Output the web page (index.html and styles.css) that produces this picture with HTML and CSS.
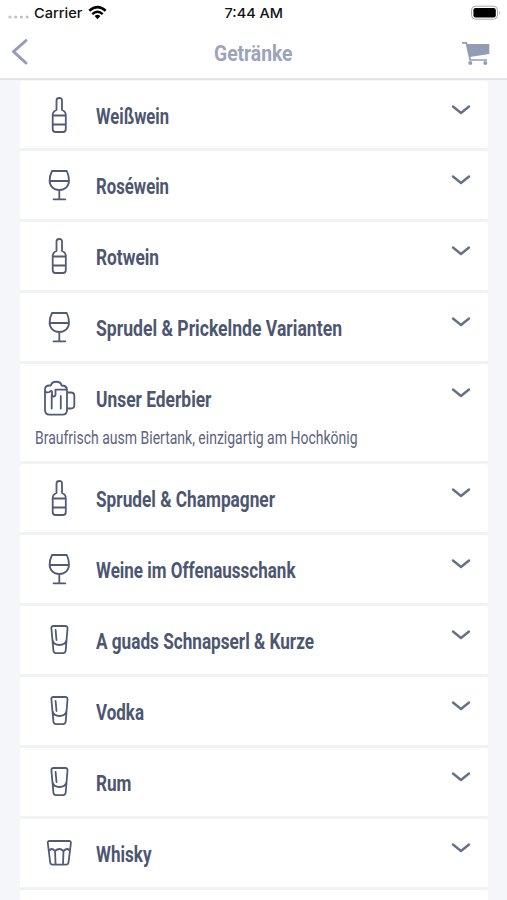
FILE: index.html
```html
<!DOCTYPE html>
<html lang="de">
<head>
<meta charset="utf-8">
<title>Getränke</title>
<link rel="stylesheet" href="styles.css">
</head>
<body>
<svg class="defs" width="0" height="0">
  <symbol id="bottle" viewBox="0 0 36 40"><path d="M15.500 15V5.500Q15.500 3 18.300 3T21 5.500V15Q24.800 16.500 24.800 20V34Q24.800 37 22 37H14.500Q11.700 37 11.700 34V20Q11.700 16.500 15.500 15ZM12 20.500H24.500M12 29.500H24.500"/></symbol>
  <symbol id="wine" viewBox="0 0 36 40"><path d="M11 6H25.800Q28 11 28 15.500C28 21 24 25 18.300 25S8.600 21 8.600 15.500Q8.600 11 11 6ZM9 16H27.600M18.300 25V34M12.500 34.300H24.300"/></symbol>
  <symbol id="beer" viewBox="0 0 36 40"><path d="M4 12V32Q4 36.600 8.500 36.600H21.500Q26 36.600 26 32V13Q26 11.700 24.500 11.700H14.500V16Q14.500 18.500 12.700 18.500T11 16V14Q11 11.700 8.500 14Q4 15.500 4 11.500Q4 7.500 8.500 7.500H10C10.500 2.500 20 2.500 20.500 7.500C24.500 7.500 26 9 26 12M26 14.500H30Q33.300 14.500 33.300 17.500V27Q33.300 30.500 30 30.500H26M10.700 17V30.500M19.800 18V30.500"/></symbol>
  <symbol id="shot" viewBox="0 0 36 40"><path d="M12.500 6H24.300Q26.700 6 26.500 8.500L24.700 30.500Q24.500 33.100 22 33.100H15Q12.600 33.100 12.400 30.500L10.400 8.500Q10.100 6 12.500 6ZM11.500 20Q12.500 25 18.400 25T25.500 20M14.600 10L15.500 20"/></symbol>
  <symbol id="whisky" viewBox="0 0 36 40"><path d="M8.500 8H28Q30.200 8 29.900 10L27.500 29.500Q27.200 31.700 25 31.700H11.700Q9.500 31.700 9.200 29.500L6.800 10Q6.500 8 8.500 8ZM8 18Q10.500 14 14 18Q18.300 14 22.500 18Q26.500 14 29 18M14 18L14.600 31.500M22.500 18L22 31.500"/></symbol>
</svg>
<header class="header">
  <div class="status">
    <svg class="left" width="112" height="26" viewBox="0 0 112 26">
      <g fill="#c2c2c4"><circle cx="10" cy="17" r="1.600"/><circle cx="15.700" cy="17" r="1.600"/><circle cx="21.400" cy="17" r="1.600"/><circle cx="27.100" cy="17" r="1.600"/></g>
      <text class="sys" x="34" y="18" textLength="48.500" lengthAdjust="spacingAndGlyphs">Carrier</text>
      <g fill="none" stroke="#000" stroke-width="2.500"><path d="M89.300 10.800Q97.500 3.500 105.700 10.800M92.300 14.100Q97.500 9.500 102.700 14.100"/></g>
      <path d="M94.600 16Q97.500 13.700 100.400 16L97.500 19.300Z"/>
    </svg>
    <svg class="time" width="60" height="26"><text class="sys" x="0.500" y="18" textLength="58.500" lengthAdjust="spacingAndGlyphs">7:44 AM</text></svg>
    <svg class="battery" width="32" height="26" viewBox="0 0 32 26"><rect x="1.500" y="6.200" width="26" height="13" rx="4" fill="#fff" stroke="#a8a8a8"/><rect x="3.400" y="8" width="22.400" height="9.500" rx="2.200"/><path d="M29.200 11Q31 12.700 29.200 14.500Z" fill="#999"/></svg>
  </div>
  <div class="nav">
    <svg class="back" width="20" height="28" viewBox="0 0 20 28"><path d="M15 2.500L2.500 13.700L15 25"/></svg>
    <svg class="title" width="86" height="36"><text class="heading" x="3" y="27" textLength="78.500" lengthAdjust="spacingAndGlyphs">Getränke</text></svg>
    <svg class="cart" width="30" height="28" viewBox="0 0 30 28"><path d="M5.500 6H28.300V16L8.500 19Z"/><path class="line" d="M1 4.800H5.300L9.200 22H26"/><circle cx="9.300" cy="25" r="2"/><circle cx="24.300" cy="25" r="2"/></svg>
  </div>
</header>
<main class="list">
  <section class="card"><svg class="icon"><use href="#bottle"/></svg><svg class="label"><text x="0" y="28.500" textLength="73" lengthAdjust="spacingAndGlyphs">Weißwein</text></svg><svg class="chevron" viewBox="0 0 20 12"><path d="M2 2.500L10 9L18 2.500"/></svg></section>
  <section class="card"><svg class="icon"><use href="#wine"/></svg><svg class="label"><text x="0" y="28.500" textLength="73" lengthAdjust="spacingAndGlyphs">Roséwein</text></svg><svg class="chevron" viewBox="0 0 20 12"><path d="M2 2.500L10 9L18 2.500"/></svg></section>
  <section class="card"><svg class="icon"><use href="#bottle"/></svg><svg class="label"><text x="0" y="28.500" textLength="63" lengthAdjust="spacingAndGlyphs">Rotwein</text></svg><svg class="chevron" viewBox="0 0 20 12"><path d="M2 2.500L10 9L18 2.500"/></svg></section>
  <section class="card"><svg class="icon"><use href="#wine"/></svg><svg class="label"><text x="0" y="28.500" textLength="246" lengthAdjust="spacingAndGlyphs">Sprudel &amp; Prickelnde Varianten</text></svg><svg class="chevron" viewBox="0 0 20 12"><path d="M2 2.500L10 9L18 2.500"/></svg></section>
  <section class="card tall"><svg class="icon"><use href="#beer"/></svg><svg class="label"><text x="0" y="28.500" textLength="115.500" lengthAdjust="spacingAndGlyphs">Unser Ederbier</text></svg><svg class="chevron" viewBox="0 0 20 12"><path d="M2 2.500L10 9L18 2.500"/></svg><svg class="note"><text x="3" y="22" textLength="322.500" lengthAdjust="spacingAndGlyphs">Braufrisch ausm Biertank, einzigartig am Hochkönig</text></svg></section>
  <section class="card"><svg class="icon"><use href="#bottle"/></svg><svg class="label"><text x="0" y="28.500" textLength="179" lengthAdjust="spacingAndGlyphs">Sprudel &amp; Champagner</text></svg><svg class="chevron" viewBox="0 0 20 12"><path d="M2 2.500L10 9L18 2.500"/></svg></section>
  <section class="card"><svg class="icon"><use href="#wine"/></svg><svg class="label"><text x="0" y="28.500" textLength="199.500" lengthAdjust="spacingAndGlyphs">Weine im Offenausschank</text></svg><svg class="chevron" viewBox="0 0 20 12"><path d="M2 2.500L10 9L18 2.500"/></svg></section>
  <section class="card"><svg class="icon"><use href="#shot"/></svg><svg class="label"><text x="0" y="28.500" textLength="218" lengthAdjust="spacingAndGlyphs">A guads Schnapserl &amp; Kurze</text></svg><svg class="chevron" viewBox="0 0 20 12"><path d="M2 2.500L10 9L18 2.500"/></svg></section>
  <section class="card"><svg class="icon"><use href="#shot"/></svg><svg class="label"><text x="0" y="28.500" textLength="48" lengthAdjust="spacingAndGlyphs">Vodka</text></svg><svg class="chevron" viewBox="0 0 20 12"><path d="M2 2.500L10 9L18 2.500"/></svg></section>
  <section class="card"><svg class="icon"><use href="#shot"/></svg><svg class="label"><text x="0" y="28.500" textLength="35.500" lengthAdjust="spacingAndGlyphs">Rum</text></svg><svg class="chevron" viewBox="0 0 20 12"><path d="M2 2.500L10 9L18 2.500"/></svg></section>
  <section class="card"><svg class="icon"><use href="#whisky"/></svg><svg class="label"><text x="0" y="28.500" textLength="55.500" lengthAdjust="spacingAndGlyphs">Whisky</text></svg><svg class="chevron" viewBox="0 0 20 12"><path d="M2 2.500L10 9L18 2.500"/></svg></section>
  <section class="card last"></section>
</main>
</body>
</html>
```
FILE: styles.css
```css
* { box-sizing: border-box; }
html, body { height: 900px; overflow: hidden; }
body { margin: 0; background: #f5f6fa; font-family: Roboto, "Open Sans", sans-serif; display: flex; flex-direction: column; }
svg { display: block; }
.defs { position: absolute; }
.header { flex: none; height: 80px; background: #fff; border-bottom: 2px solid #e2e3e6; }
.status { height: 26px; display: grid; grid-template-columns: 1fr 60px 1fr; }
.battery { justify-self: end; margin-right: 5px; }
.sys { font: 500 13.5px Inter, sans-serif; fill: #111; }
.nav { height: 52px; display: grid; grid-template-columns: 1fr 86px 1fr; align-items: center; padding: 0 16px 0 11px; }
.title { margin-left: 3px; overflow: visible; }
.back { fill: none; stroke: #939db7; stroke-width: 3; stroke-linecap: round; stroke-linejoin: round; }
.heading { font-size: 22.5px; font-weight: 700; fill: #9ba4bb; }
.cart { justify-self: end; fill: #929db5; }
.cart .line { fill: none; stroke: #929db5; stroke-width: 1.7; }
.list { flex: 1; min-height: 0; padding: .6px 19px 0 20px; display: flex; flex-direction: column; }
.card { flex: none; height: 70.9px; background: #fff; border-bottom: 3px solid #f1f2f4; border-radius: 3px; display: grid; grid-template-columns: 36px 1fr 20px; column-gap: 17px; padding: 14px 17px 0 22px; align-content: start; }
.card.tall { height: 100.3px; }
.card.last { flex: 1; height: auto; min-height: 0; padding: 0; border-bottom: 0; border-radius: 3px 3px 0 0; }
.icon { width: 36px; height: 40px; margin-left: -.8px; fill: none; stroke: #525b76; stroke-width: 1.8; stroke-linecap: round; stroke-linejoin: round; }
.label { width: 320px; height: 40px; margin-left: 1.3px; fill: #4d5670; font-size: 21.5px; font-weight: 700; }
.chevron { width: 20px; height: 12px; margin-top: 9px; fill: none; stroke: #667085; stroke-width: 2.4; stroke-linecap: round; stroke-linejoin: round; }
.note { grid-column: 1 / -1; width: 350px; height: 32px; margin: 4px 0 0 -10px; fill: #5a637d; font-size: 18.5px; }
```
